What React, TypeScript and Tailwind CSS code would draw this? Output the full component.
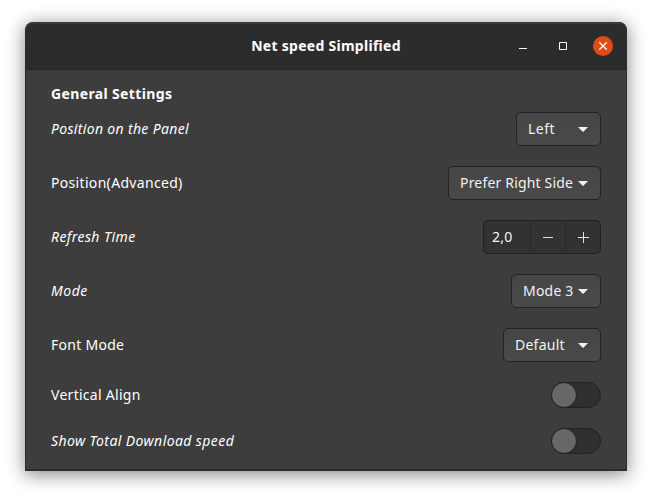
import React from "react";
import { clsx } from "clsx";

function Dropdown({ label, width, text }: { label: string; width: string; text: string }) {
  return (
    <button
      className={clsx(
        "flex h-[34px] shrink-0 items-center justify-between rounded-[5px] border border-[#232323] bg-linear-to-b from-[#464646] to-[#494949] pr-3 pl-[11px] whitespace-nowrap text-[#f1f1f1]",
        width,
      )}
    >
      <span className={clsx("w-0", text)}>{label}</span>
      <svg width="10" height="6" viewBox="0 0 10 6" className="shrink-0">
        <path d="M0 0.9H10L5.6 5.6Q5 6.1 4.4 5.6Z" fill="#f1f1f1" />
      </svg>
    </button>
  );
}

function SpinButton({ value }: { value: string }) {
  return (
    <div className="flex h-[34px] w-[118px] shrink-0 overflow-hidden rounded-[5px] border border-[#202020] bg-[#323232] text-[#f7f7f7]">
      <span className="flex flex-1 items-center pl-2 tracking-[0.2px]">{value}</span>
      <button className="flex w-[35px] items-center justify-center border-l border-[#292929]">
        <svg width="12" height="12" viewBox="0 0 12 12" shapeRendering="crispEdges">
          <path d="M1 6h10v1H1z" fill="#dedede" />
        </svg>
      </button>
      <button className="flex w-[35px] items-center justify-center border-l border-[#292929]">
        <svg width="12" height="12" viewBox="0 0 12 12" shapeRendering="crispEdges">
          <path d="M1 6h11v1H1zM6 1h1v11H6z" fill="#dedede" />
        </svg>
      </button>
    </div>
  );
}

function Switch() {
  return (
    <button className="flex h-[26px] w-[50px] shrink-0 rounded-full border border-[#222222] bg-[#2f2f2f]">
      <span className="-mt-px -ml-px size-[26px] rounded-full border border-[#202020] bg-[#676767]" />
    </button>
  );
}

function Row({ label, text, children }: { label: string; text: string; children: React.ReactNode }) {
  return (
    <div className="flex items-center justify-between">
      <span className={clsx("whitespace-nowrap", text)}>{label}</span>
      {children}
    </div>
  );
}

export default function App() {
  return (
    <div className="h-[499px] w-[652px] overflow-hidden bg-white px-[25px] pt-[22px] font-['Noto_Sans','Open_Sans',sans-serif] text-[14px] leading-5 text-white">
      <div className="flex h-[449px] flex-col overflow-hidden rounded-t-[8px] border-x border-b-2 border-[#2d2d2d] bg-[#3d3d3d] shadow-[0_3px_18px_1px_rgba(0,0,0,0.45)]">
        <header className="grid h-12 shrink-0 grid-cols-[1fr_auto_1fr] items-center rounded-t-[7px] border-t-2 border-b border-t-[#393939] border-b-[#222222] bg-[#2c2c2c] pb-px">
          <span />
          <h1 className="font-bold tracking-[0.28px] whitespace-nowrap">Net speed Simplified</h1>
          <div className="flex justify-end gap-5 pr-[13px]">
            <button className="flex size-5 items-center justify-center">
              <svg width="8" height="8" viewBox="0 0 8 8">
                <path d="M0 6h8v1H0z" fill="white" />
              </svg>
            </button>
            <button className="flex size-5 items-center justify-center">
              <svg width="8" height="8" viewBox="0 0 8 8">
                <path d="M.5.5h7v7h-7z" fill="none" stroke="white" />
              </svg>
            </button>
            <button className="flex size-5 items-center justify-center rounded-full bg-[#e04b18]">
              <svg width="8" height="8" viewBox="0 0 8 8">
                <path d="M.3.3l7.400 7.400M7.700.3l-7.400 7.400" stroke="white" strokeWidth="1.3" />
              </svg>
            </button>
          </div>
        </header>
        <main className="px-[25px] pt-[14px]">
          <h2 className="mb-2 font-bold tracking-[0.36px]">General Settings</h2>
          <div className="flex flex-col gap-5">
            <Row label="Position on the Panel" text="italic tracking-[0.33px]">
              <Dropdown label="Left" width="w-[85px]" text="tracking-[0.5px]" />
            </Row>
            <Row label="Position(Advanced)" text="tracking-[0.32px]">
              <Dropdown label="Prefer Right Side" width="w-[153px]" text="tracking-[0.18px]" />
            </Row>
            <Row label="Refresh Time" text="italic tracking-[0.43px]">
              <SpinButton value="2,0" />
            </Row>
            <Row label="Mode" text="italic tracking-[0.5px]">
              <Dropdown label="Mode 3" width="w-[90px]" text="tracking-[0.2px]" />
            </Row>
            <Row label="Font Mode" text="tracking-[0.28px]">
              <Dropdown label="Default" width="w-[98px]" text="tracking-[0.25px]" />
            </Row>
            <Row label="Vertical Align" text="tracking-[0.28px]">
              <Switch />
            </Row>
            <Row label="Show Total Download speed" text="italic tracking-[0.41px]">
              <Switch />
            </Row>
          </div>
        </main>
      </div>
    </div>
  );
}
